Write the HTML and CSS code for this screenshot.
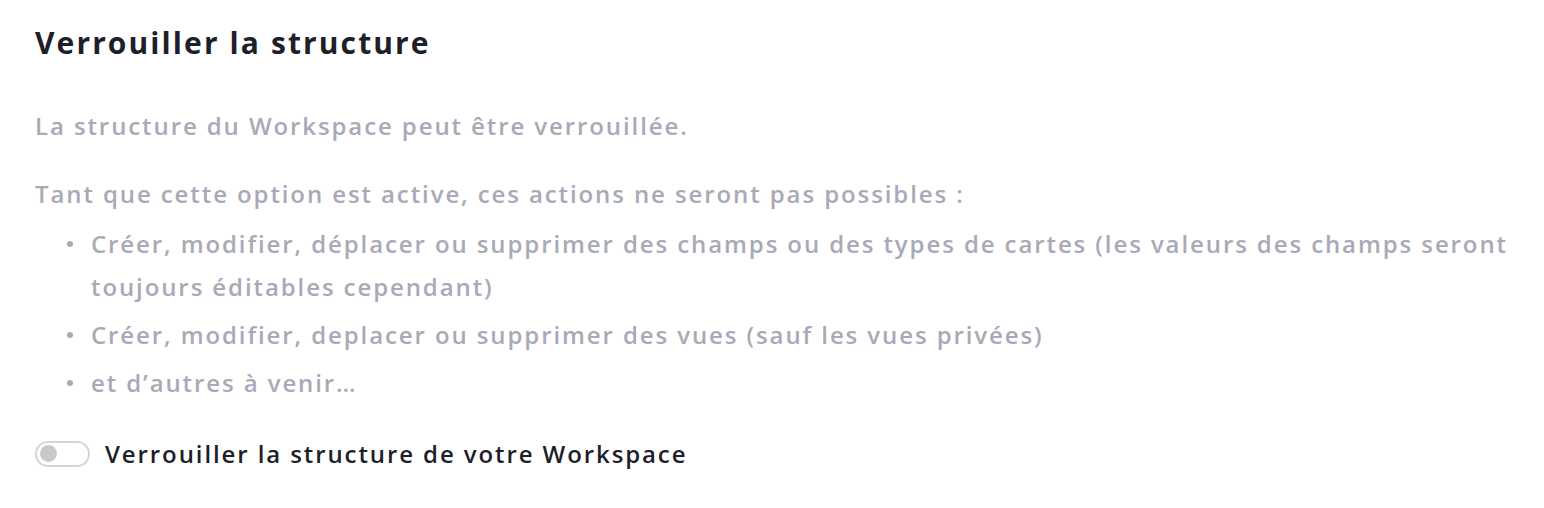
FILE: index.html
```html
<!DOCTYPE html>
<html lang="fr">
<head>
<meta charset="utf-8">
<link rel="stylesheet" href="styles.css">
</head>
<body>
<section class="panel">
  <h2 class="title">Verrouiller la structure</h2>
  <p class="desc first">La structure du Workspace peut être verrouillée.</p>
  <p class="desc">Tant que cette option est active, ces actions ne seront pas possibles :</p>
  <ul class="list">
    <li>Créer, modifier, déplacer ou supprimer des champs ou des types de cartes (les valeurs des champs seront toujours éditables cependant)</li>
    <li>Créer, modifier, deplacer ou supprimer des vues (sauf les vues privées)</li>
    <li>et d’autres à venir…</li>
  </ul>
  <label class="toggle-row">
    <span class="toggle"><span class="knob"></span></span>
    <span class="toggle-label">Verrouiller la structure de votre Workspace</span>
  </label>
</section>
</body>
</html>
```

FILE: styles.css
```css
html, body {
  margin: 0;
  padding: 0;
  background: #ffffff;
}
body {
  font-family: "Open Sans", "Noto Sans", sans-serif;
}
.panel {
  padding: 25px 20px 0 35px;
}
.title {
  margin: 0;
  font-size: 30px;
  line-height: 36px;
  font-weight: 700;
  letter-spacing: 2.1px;
  color: #1e1f2a;
}
.desc {
  margin: 43px 0 0;
  font-size: 24px;
  line-height: 43px;
  letter-spacing: 1.9px;
  color: #a8aab7;
  font-weight: 600;
}
.desc + .desc {
  margin-top: 25px;
}
.list {
  list-style: none;
  margin: 7px 0 0;
  padding: 0 0 0 56px;
  font-size: 24px;
  line-height: 43px;
  letter-spacing: 1.9px;
  color: #a8aab7;
  font-weight: 600;
}
.list li {
  position: relative;
  margin-bottom: 5px;
}
.list li::before {
  content: "";
  position: absolute;
  left: -24px;
  top: 19px;
  width: 6px;
  height: 6px;
  border-radius: 50%;
  background: #a8aab7;
}
.toggle-row {
  display: flex;
  align-items: center;
  gap: 15px;
  margin-top: 28px;
}
.toggle {
  box-sizing: border-box;
  width: 55px;
  height: 26px;
  border: 2px solid #d6d6d9;
  border-radius: 13px;
  display: flex;
  align-items: center;
  padding-left: 3px;
}
.knob {
  width: 17px;
  height: 17px;
  border-radius: 50%;
  background: #c9c9cc;
}
.toggle-label {
  font-size: 24px;
  line-height: 43px;
  letter-spacing: 1.9px;
  color: #1e1f2a;
  font-weight: 600;
}
```
